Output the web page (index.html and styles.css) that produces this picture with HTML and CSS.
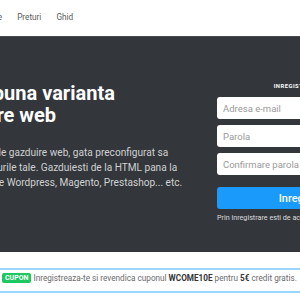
FILE: index.html
```html
<!DOCTYPE html>
<html lang='ro'>
<head>
	<meta charset='UTF-8'>
	<meta name='viewport' content='width=device-width, initial-scale=1.0'>
	<title>Gazduire web</title>
	<link rel="stylesheet" href="styles.css">
</head>
<body>
	<div class='top-bar'>
		<div class='wrap'>
			<ul class='nav'>
				<li>Gazduire</li>
				<li>Preturi</li>
				<li>Ghid</li>
			</ul>
		</div>
	</div>

	<div class='hero'>
		<div class='wrap hero-row'>
			<div class='hero-text'>
				<h1>Cea mai buna varianta<br>in gazduire web</h1>
				<p>Alegeti pachete de gazduire web, gata preconfigurat sa<br>ruleze toate site-urile tale. Gazduiesti de la HTML pana la<br>aplicatii complexe Wordpress, Magento, Prestashop... etc.</p>
			</div>
			<form class='signup'>
				<div class='signup-title'>INREGISTRARE ACUM</div>
				<input class='field' type='text' placeholder='Adresa e-mail'>
				<input class='field' type='password' placeholder='Parola'>
				<input class='field' type='password' placeholder='Confirmare parola'>
				<button class='signup-btn' type='button'>Inregistrare</button>
				<div class='signup-note'>Prin inregistrare esti de acord cu termenii si conditiile</div>
			</form>
		</div>
	</div>

	<div class='coupon'>
		<span class='coupon-tag'>CUPON</span>
		<span class='coupon-text'>Inregistreaza-te si revendica cuponul <b>WCOME10E</b> pentru <b>5€</b> credit gratis.</span>
	</div>
</body>
</html>
```

FILE: styles.css
```css
html, body{
	margin:0;
	padding:0;
	width:100%;
	height:100%;
	overflow:hidden;
	background-color:white;
	font-family: Roboto, "Liberation Sans", Arial, sans-serif;
}
.wrap{
	width:480px;
	margin-left:-77px;
}
.top-bar{
	height:36px;
	display:flex;
	align-items:center;
	background-color:white;
}
.nav{
	display:flex;
	gap:15px;
	list-style:none;
	margin:0 0 2px 0;
	padding:0 0 0 47px;
	font-size:8.2px;
	color:#5a5a5a;
}
.hero{
	background-color:#33373c;
	border-top:1px solid #46494e;
	padding:44px 0 29px 0;
}
.hero-row{
	display:flex;
	align-items:flex-start;
	gap:27px;
}
.hero-text{
	width:267px;
	flex:0 0 267px;
}
.hero-text h1{
	margin:1px 0 0 -8px;
	font-size:20px;
	line-height:22px;
	font-weight:bold;
	color:white;
	white-space:nowrap;
}
.hero-text p{
	margin:18.5px 0 0 0;
	font-size:10.1px;
	line-height:15px;
	color:#cfd0d1;
	white-space:nowrap;
}
.signup{
	width:180px;
	flex:0 0 180px;
	display:flex;
	flex-direction:column;
	margin:0;
}
.signup-title{
	text-align:center;
	font-size:5.8px;
	line-height:10px;
	font-weight:bold;
	letter-spacing:0.5px;
	color:white;
	margin-bottom:6px;
}
.field{
	height:22px;
	box-sizing:border-box;
	border:none;
	border-radius:3px;
	padding:0 6px;
	margin:0 0 6px 0;
	font-family:inherit;
	font-size:9.5px;
	background-color:white;
}
.field::placeholder{
	color:#9a9a9a;
}
.signup-btn{
	height:22px;
	margin-top:6px;
	border:none;
	border-radius:3px;
	background-color:#1a9bfb;
	color:white;
	font-family:inherit;
	font-size:11px;
	font-weight:500;
}
.signup-note{
	margin-top:4px;
	font-size:7.2px;
	line-height:10px;
	color:#dcdcdc;
	white-space:nowrap;
}
.coupon{
	margin-top:16px;
	border-top:2px solid #9ad5fc;
	border-bottom:2px solid #9ad5fc;
	padding:3px 2px 8px 2px;
	display:flex;
	align-items:center;
	gap:2px;
	white-space:nowrap;
}
.coupon-tag{
	background-color:#1ec760;
	color:white;
	font-size:7px;
	font-weight:bold;
	line-height:10px;
	padding:0 3px;
	border-radius:2px;
}
.coupon-text{
	font-size:8.2px;
	color:#6a6a6a;
}
.coupon-text b{
	color:#333;
}
```
